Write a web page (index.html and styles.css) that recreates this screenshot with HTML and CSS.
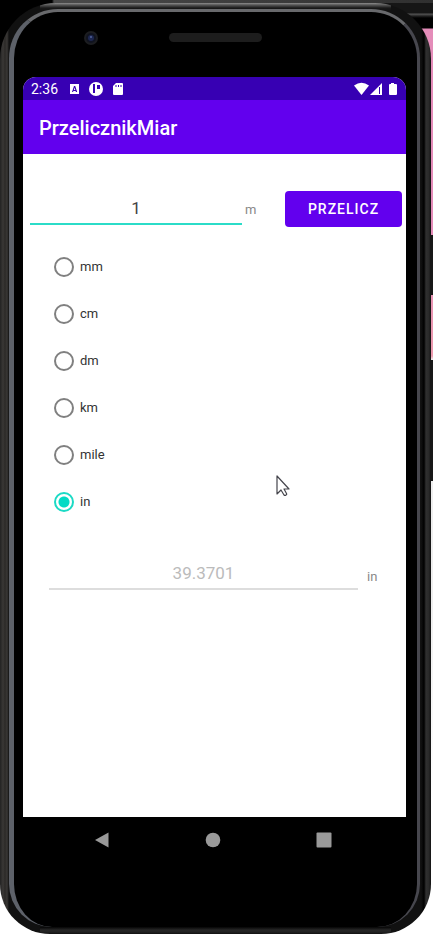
FILE: index.html
```html
<!DOCTYPE html>
<html lang="pl">
<head>
<meta charset="utf-8">
<meta name="viewport" content="width=device-width, initial-scale=1">
<title>PrzelicznikMiar</title>
<link rel="stylesheet" href="styles.css">
</head>
<body>
<div class="desktop">
  <span class="side-key power"></span>
  <span class="side-key volume"></span>
  <div class="phone">
    <div class="rim">
      <div class="top-bezel">
        <svg class="camera" viewBox="0 0 16 16" aria-hidden="true">
          <circle cx="8" cy="8" r="7" fill="#1c1d20"/>
          <circle cx="8" cy="8" r="5" fill="#10131f"/>
          <circle cx="8" cy="8" r="3" fill="#1d2750"/>
          <circle cx="8" cy="7" r="1" fill="#53659b"/>
        </svg>
        <span class="speaker"></span>
      </div>
      <div class="screen">
        <div class="status">
          <span class="clock">2:36</span>
          <svg class="notices" viewBox="0 0 56 14" aria-hidden="true">
            <path fill="#fff" fill-rule="evenodd" d="M1 2h9v10H1zM5 4 3 10h1l.5-1h2L7 10h1.200L6.200 4zm.6 1.500L6.300 8H4.900z"/>
            <circle cx="27" cy="7" r="7" fill="#fff"/>
            <path d="M24 2h2v9h-2zM28 3h3v4h-3z" fill="#3700b3"/>
            <path d="M47 1h6q1 0 1 1v10q0 1-1 1h-8q-1 0-1-1V4z" fill="#fff"/>
            <path d="M47 3v2M49.500 3v2M52 3v2" stroke="#3700b3"/>
          </svg>
          <svg class="signals" viewBox="0 0 44 14" aria-hidden="true">
            <path d="M0 3.500Q7.500-2 15 3.500L7.500 13z" fill="#fff"/>
            <path d="M16 13 28 1v12z" fill="#fff"/>
            <path d="M25.500 5v7" stroke="#3700b3"/>
            <path d="M37 1h3v1h2q1 0 1 1v9q0 1-1 1h-6q-1 0-1-1V3q0-1 1-1h1z" fill="#fff"/>
          </svg>
        </div>
        <header class="app-bar"><h1>PrzelicznikMiar</h1></header>
        <main class="content">
          <div class="entry">
            <input class="field" id="value" type="text" inputmode="decimal" value="1" aria-label="Wartość">
            <label class="unit" for="value">m</label>
            <button class="convert" type="button">PRZELICZ</button>
          </div>
          <div class="units" role="radiogroup" aria-label="Jednostka">
            <label class="choice"><input type="radio" name="unit">mm</label>
            <label class="choice"><input type="radio" name="unit">cm</label>
            <label class="choice"><input type="radio" name="unit">dm</label>
            <label class="choice"><input type="radio" name="unit">km</label>
            <label class="choice"><input type="radio" name="unit">mile</label>
            <label class="choice"><input type="radio" name="unit" checked>in</label>
          </div>
          <div class="result">
            <input class="field" id="result" type="text" value="39.3701" disabled aria-label="Wynik">
            <label class="unit" for="result">in</label>
          </div>
          <svg class="pointer" viewBox="0 0 14 22" aria-hidden="true">
            <path d="M1 1v18l4-4 3 5q1 1 2 0 1 0 .5-1.500L8 14h5z" fill="#fff" stroke="#45454c" stroke-width="1.200" stroke-linejoin="round"/>
          </svg>
        </main>
      </div>
      <nav class="nav">
        <button type="button" aria-label="Wstecz"><svg viewBox="0 0 16 16"><path d="M1 8 14.500.500v15z"/></svg></button>
        <button type="button" aria-label="Ekran główny"><svg viewBox="0 0 16 16"><circle cx="8" cy="8" r="7.300"/></svg></button>
        <button type="button" aria-label="Ostatnie"><svg viewBox="0 0 16 16"><rect x=".5" y=".5" width="15" height="15" rx="1"/></svg></button>
      </nav>
    </div>
  </div>
</div>
</body>
</html>
```
FILE: styles.css
```css
* {
  box-sizing: border-box;
}

body {
  margin: 0;
  font-family: Roboto, "Noto Sans", sans-serif;
  font-size: 13px;
  color: #333;
}

.desktop {
  position: relative;
  display: flex;
  min-height: 100vh;
  padding: 3px 2px 0 0;
  background:
    linear-gradient(90deg, #000 0 52px, #4a4a4a 54px, #303030) top / 100% 3px no-repeat,
    linear-gradient(#161616 0 13px, #555 14px, #222 16px, #000 18px 28px, #e48cb9 29px 230px, #ec9aae 356px, #eee 360px 600px, #fff 800px) right top / 50% 100% no-repeat,
    linear-gradient(#000 0 50%, #fff 50%);
}

.side-key {
  position: absolute;
  right: 0;
  width: 6px;
  background: #171717;
}

.power {
  top: 235px;
  height: 60px;
}

.volume {
  top: 360px;
  height: 121px;
}

.phone {
  position: relative;
  display: flex;
  flex: 1;
  min-width: 0;
  padding: 6px 11px 7px 9px;
  border-radius: 56px 56px 50px 50px;
  background:
    linear-gradient(#8e8e8e, #555 2px, #191919 5px, transparent 8px) top / calc(100% - 80px) 8px no-repeat,
    linear-gradient(#050505, #262626 3px, #222 5px, #111) bottom / calc(100% - 80px) 7px no-repeat,
    linear-gradient(90deg, #222, #3a3836 3px, #2b2927 5px, #3a3836 7px, #111 9px, #111 calc(100% - 10px), #000 calc(100% - 7px), #303030 calc(100% - 5px), #292929 calc(100% - 2px), #111);
}

.rim {
  display: flex;
  flex: 1;
  flex-direction: column;
  min-width: 0;
  border-style: solid;
  border-width: 3px 3px 0 5px;
  border-color: #68696c #47474e #151515 #5d6169;
  border-radius: 49px 49px 43px 43px;
  background: #000;
}

.top-bezel {
  position: relative;
  display: flex;
  flex: 0 0 65px;
  justify-content: center;
  padding-top: 21px;
}

.camera {
  position: absolute;
  top: 18px;
  left: 69px;
  width: 16px;
  height: 16px;
}

.speaker {
  width: 93px;
  height: 9px;
  border-radius: 5px;
  background: #1d1d1d;
}

.screen {
  display: flex;
  flex: 1;
  flex-direction: column;
  margin: 0 11px 0 9px;
  overflow: hidden;
  border-radius: 13px 13px 0 0;
  background: #fff;
}

.status {
  display: flex;
  align-items: center;
  height: 23px;
  padding: 0 8px;
  background: #3700b3;
  color: #fff;
  font-size: 14px;
}

.notices {
  width: 56px;
  height: 14px;
  margin-left: 11px;
}

.signals {
  width: 44px;
  height: 14px;
  margin-left: auto;
}

.app-bar {
  display: flex;
  align-items: center;
  height: 54px;
  padding: 2px 16px 0;
  background: #6200ee;
  color: #fff;
}

h1 {
  margin: 0;
  font-size: 20px;
  font-weight: 500;
}

.content {
  position: relative;
  flex: 1;
  padding-top: 37px;
}

.entry,
.result {
  display: flex;
  align-items: center;
}

.entry {
  padding: 0 4px 0 7px;
}

.field {
  flex: 1;
  width: 0;
  min-width: 0;
  height: 32px;
  padding: 0;
  border: 0;
  border-bottom: 2px solid #2bdcc8;
  outline: 0;
  background: transparent;
  color: #444;
  font: 17px/30px Roboto, sans-serif;
  text-align: center;
}

.unit {
  color: #888;
}

.entry .unit {
  width: 43px;
  padding-left: 3px;
}

.convert {
  width: 117px;
  height: 36px;
  padding: 0;
  border: 0;
  border-radius: 4px;
  background: #6200ee;
  color: #fff;
  font: 500 14px Roboto, sans-serif;
  letter-spacing: 1px;
}

.units {
  display: flex;
  flex-direction: column;
  align-items: flex-start;
  padding: 16px 31px 0;
}

.choice {
  display: flex;
  align-items: center;
  gap: 6px;
  height: 47px;
}

.choice input {
  appearance: none;
  width: 20px;
  height: 20px;
  margin: 0;
  border: 2px solid #808080;
  border-radius: 50%;
}

.choice input:checked {
  border-color: #1bdac5;
  background: radial-gradient(circle, #03dac5 5px, transparent 6px);
}

.result {
  padding: 33px 28px 0 26px;
}

.result .field {
  border-bottom-color: #ddd;
  color: #bbb;
}

.result .unit {
  width: 11px;
  margin-left: 9px;
  padding-top: 4px;
}

.pointer {
  position: absolute;
  top: 321px;
  left: 253px;
  width: 14px;
  height: 22px;
}

.nav {
  display: flex;
  flex: 0 0 110px;
  align-items: flex-start;
  justify-content: space-between;
  padding: 15px 85px 0 80px;
}

.nav button {
  width: 16px;
  height: 16px;
  padding: 0;
  border: 0;
  background: none;
}

.nav svg {
  display: block;
  fill: #999;
}
```
